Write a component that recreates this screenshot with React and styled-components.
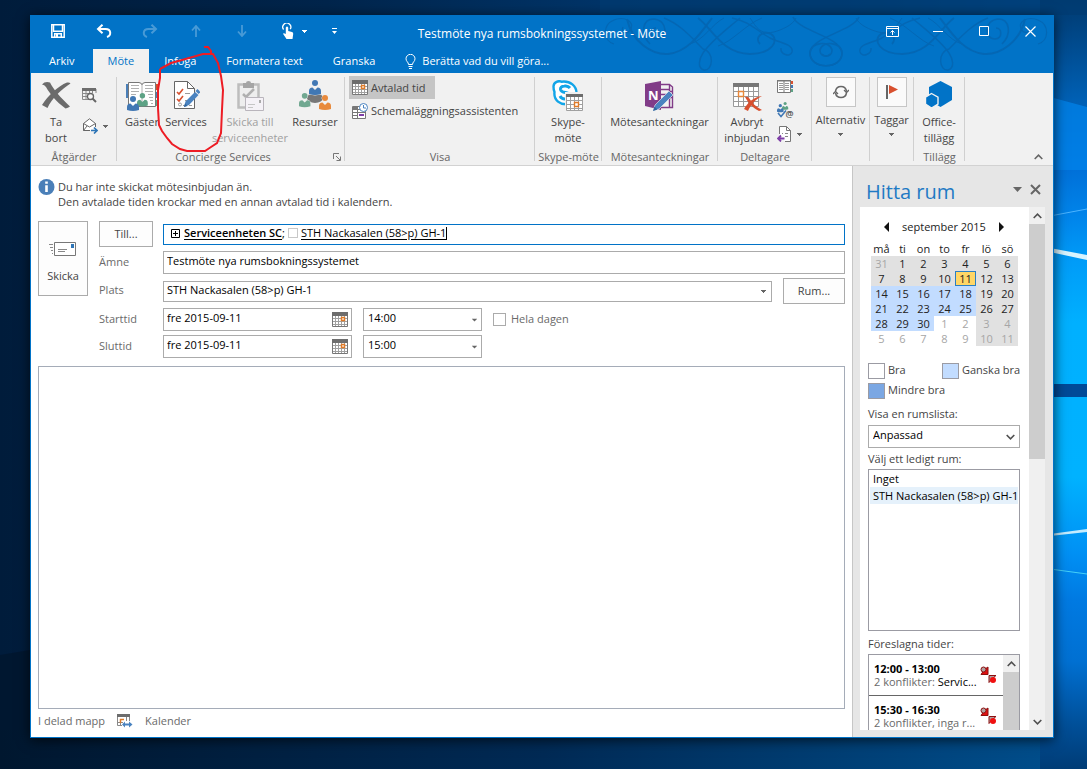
import React from 'react';
import styled, { createGlobalStyle } from 'styled-components';

const GlobalStyle = createGlobalStyle`
  * {
    box-sizing: border-box;
  }
  body {
    margin: 0;
  }
  body, button, input, select, textarea {
    font-family: "Open Sans", "Noto Sans", sans-serif;
    font-size: 11px;
    line-height: 16px;
    color: #444;
  }
  button {
    padding: 0;
    border: 0;
    background: none;
    cursor: pointer;
  }
  svg {
    display: block;
    flex: none;
  }
`;

const Desktop = styled.div`
  position: relative;
  display: flex;
  height: 100vh;
  padding: 15px 33px 31px 30px;
  overflow: hidden;
  background: linear-gradient(90deg, #001c3b 0%, #00254c 30%, #003468 55%, #004079 80%, #00529c 100%);
`;

const Wallpaper = styled.svg`
  position: absolute;
  top: 0;
  right: 0;
  width: 100%;
  height: 100%;
`;

const Window = styled.div`
  position: relative;
  display: flex;
  flex-direction: column;
  flex: 1;
  min-width: 0;
  border: 1px solid #0173c7;
  background: #fff;
  box-shadow: 0 2px 12px rgba(0, 0, 0, 0.7);
`;

/* title bar and tabs */

const Header = styled.header`
  position: relative;
  background: #0173c7;
  color: #fff;
`;

const Swirls = styled.svg`
  position: absolute;
  top: 0;
  right: 0;
`;

const TitleBar = styled.div`
  position: relative;
  display: grid;
  grid-template-columns: 1fr auto 1fr;
  height: 33px;
`;

const ButtonStrip = styled.div`
  display: flex;
  height: 30px;
  padding-left: ${({ $end }) => ($end ? 0 : 4)}px;
  justify-content: ${({ $end }) => ($end ? 'flex-end' : 'flex-start')};
`;

const TitleButton = styled.button`
  display: flex;
  align-items: center;
  justify-content: center;
  gap: 8px;
  width: 46px;
  padding-left: ${({ $split }) => ($split ? 12 : 0)}px;
  opacity: ${({ disabled }) => (disabled ? 0.28 : 1)};
`;

const Title = styled.h1`
  margin: 0;
  padding-top: 2px;
  font-size: 12px;
  font-weight: 400;
  line-height: 32px;
  white-space: nowrap;
`;

const Tabs = styled.nav`
  position: relative;
  display: flex;
  height: 24px;
`;

const Tab = styled.button`
  display: flex;
  align-items: center;
  gap: 6px;
  padding: 0 ${({ $wide }) => ($wide ? 18 : 15)}px;
  background: ${({ $active }) => ($active ? '#f1f1f1' : 'none')};
  color: ${({ $active }) => ($active ? '#0173c7' : '#fff')};
  white-space: nowrap;
`;

/* ribbon */

const Ribbon = styled.div`
  position: relative;
  display: flex;
  height: 93px;
  border-bottom: 1px solid #d2d2d2;
  background: #f1f1f1;
`;

const Group = styled.section`
  position: relative;
  display: flex;
  flex-direction: column;
  flex: none;
  width: ${({ $width }) => $width}px;
  &::after {
    content: '';
    position: absolute;
    top: 4px;
    right: 0;
    bottom: 4px;
    width: 1px;
    background: #d0d0d0;
  }
`;

const GroupBody = styled.div`
  display: flex;
  flex: 1;
  justify-content: ${({ $start }) => ($start ? 'flex-start' : 'center')};
  padding: 4px 5px 0 4px;
`;

const GroupLabel = styled.div`
  height: 16px;
  padding-right: ${({ $launcher }) => ($launcher ? 16 : 0)}px;
  color: #666;
  text-align: center;
  white-space: nowrap;
`;

const Launcher = styled.button`
  position: absolute;
  right: 4px;
  bottom: 4px;
`;

const Collapse = styled.button`
  position: absolute;
  right: 10px;
  bottom: 5px;
`;

const BigButton = styled.button`
  display: flex;
  flex-direction: column;
  align-items: center;
  flex: none;
  gap: 2px;
  width: ${({ $width }) => $width}px;
  padding-top: 3px;
  color: ${({ disabled }) => (disabled ? '#a0a0a0' : '#444')};
  white-space: nowrap;
`;

const BigLabel = styled.span`
  display: flex;
  flex-direction: column;
  align-items: center;
`;

const BoxButton = styled(BigButton)`
  gap: 5px;
  padding-top: 0;
`;

const IconBox = styled.span`
  display: flex;
  align-items: center;
  justify-content: center;
  width: 30px;
  height: 30px;
  border: 1px solid #c6c6c6;
  background: #fafafa;
`;

const SmallColumn = styled.div`
  display: flex;
  flex-direction: column;
  gap: ${({ $gap }) => $gap}px;
  padding: ${({ $top }) => $top}px 0 0 5px;
`;

const SmallButton = styled.button`
  display: flex;
  align-items: center;
  gap: 5px;
`;

const ViewColumn = styled.div`
  display: flex;
  flex-direction: column;
  align-items: flex-start;
  margin-top: -1px;
`;

const ViewButton = styled.button`
  display: flex;
  align-items: center;
  gap: 3px;
  height: 23px;
  padding: 0 10px 0 3px;
  background: ${({ $active }) => ($active ? '#c5c5c5' : 'none')};
  white-space: nowrap;
`;

const RedMark = styled.svg`
  position: absolute;
  top: 24px;
  left: 124px;
  pointer-events: none;
`;

/* form */

const Body = styled.div`
  display: flex;
  flex: 1;
  min-height: 0;
`;

const Main = styled.main`
  display: flex;
  flex-direction: column;
  flex: 1;
  min-width: 0;
  padding: 13px 7px 0;
`;

const Info = styled.div`
  display: flex;
  gap: 3px;
  p {
    margin: 0;
    line-height: 15px;
  }
`;

const Form = styled.form`
  display: flex;
  align-items: flex-start;
  gap: 11px;
  margin: 12px 0 8px;
`;

const OutlineButton = styled.button`
  width: ${({ $width }) => $width}px;
  height: 26px;
  border: 1px solid #ababab;
  background: #fdfdfd;
`;

const SendButton = styled(OutlineButton)`
  display: flex;
  flex-direction: column;
  align-items: center;
  justify-content: center;
  gap: 12px;
  height: 75px;
  padding-top: 8px;
`;

const Rows = styled.div`
  display: flex;
  flex-direction: column;
  flex: 1;
  gap: 4px;
`;

const Row = styled.div`
  display: grid;
  grid-template-columns: 54px 1fr;
  column-gap: 10px;
  align-items: center;
  label {
    padding-bottom: 2px;
    color: #6a6a6a;
  }
`;

const Fields = styled.div`
  display: flex;
  align-items: center;
  gap: 11px;
`;

const Field = styled.div`
  display: flex;
  align-items: center;
  flex: ${({ $width }) => ($width ? 'none' : 1)};
  width: ${({ $width }) => ($width ? `${$width}px` : 'auto')};
  height: ${({ $low }) => ($low ? 21 : 23)}px;
  padding: 0 3px;
  border: 1px solid ${({ $focus }) => ($focus ? '#0173c7' : '#ababab')};
  background: #fff;
  color: #000;
  white-space: nowrap;
  input {
    flex: 1;
    min-width: 0;
    padding: 0 0 ${({ $low }) => ($low ? 2 : 3)}px;
    border: 0;
    outline: 0;
    background: none;
    color: #000;
  }
`;

const Recipients = styled(Field)`
  padding: 0 3px 2px 7px;
  svg {
    margin-right: 4px;
  }
  b {
    font-weight: 600;
  }
  b, u {
    text-underline-offset: 2px;
  }
`;

const Presence = styled.span`
  width: 10px;
  height: 10px;
  margin: 0 3px;
  border: 1px solid #c8c8c8;
`;

const Caret = styled.span`
  width: 1px;
  height: 13px;
  background: #000;
`;

const PickerButton = styled.button`
  display: flex;
  padding: 0 ${({ $slim }) => ($slim ? 2 : 0)}px;
`;

const SelectWrap = styled.div`
  position: relative;
  width: ${({ $width }) => ($width ? `${$width}px` : '100%')};
  select {
    display: block;
    width: 100%;
    height: 23px;
    padding: 0 4px 3px;
    border: 1px solid #ababab;
    border-radius: 0;
    appearance: none;
    background: #fff;
    color: #000;
  }
  svg {
    position: absolute;
    top: 50%;
    right: 5px;
    transform: translateY(-50%);
    pointer-events: none;
  }
`;

const AllDay = styled.div`
  display: flex;
  align-items: center;
  gap: 5px;
  input {
    width: 13px;
    height: 13px;
    margin: 0;
    border: 1px solid #ababab;
    appearance: none;
    background: #fff;
  }
`;

const Editor = styled.textarea`
  flex: 1;
  width: 100%;
  min-height: 0;
  border: 1px solid #a5acb8;
  outline: 0;
  resize: none;
`;

const StatusBar = styled.footer`
  display: flex;
  align-items: center;
  gap: 12px;
  height: 28px;
  padding-bottom: 4px;
  color: #6a6a6a;
`;

/* room finder */

const Sidebar = styled.aside`
  display: flex;
  flex-direction: column;
  flex: none;
  width: 201px;
  padding: 0 8px 7px 7px;
  border-left: 1px solid #c6c6c6;
  background: #e6e6e6;
`;

const SidebarHead = styled.div`
  display: flex;
  align-items: center;
  gap: 8px;
  height: 41px;
  padding: 6px 4px 0 6px;
  h2 {
    flex: 1;
    margin: 0;
    padding-top: 5px;
    color: #1f7ac4;
    font-size: 20px;
    font-weight: 400;
    line-height: 28px;
  }
`;

const Panel = styled.div`
  display: flex;
  flex: 1;
  min-height: 0;
  overflow: hidden;
  background: #fff;
`;

const PanelBody = styled.div`
  flex: 1;
  min-width: 0;
  padding: 12px 9px 0 8px;
`;

const ScrollBar = styled.div`
  display: flex;
  flex-direction: column;
  flex: none;
  width: 16px;
  background: #f0f0f0;
  button {
    display: flex;
    align-items: center;
    justify-content: center;
    height: 17px;
  }
`;

const Thumb = styled.div`
  flex: 0 0 ${({ $size }) => $size};
  background: #cdcdcd;
`;

const Spacer = styled.div`
  flex: 1;
`;

const MonthBar = styled.div`
  display: flex;
  align-items: center;
  justify-content: center;
  gap: 13px;
  height: 16px;
  color: #222;
`;

const Calendar = styled.table`
  width: 147px;
  margin: 6px 0 17px 3px;
  border-collapse: collapse;
  table-layout: fixed;
  color: #222;
  line-height: 15px;
  th, td {
    height: 15px;
    padding: 0;
    font-weight: 400;
    text-align: center;
  }
`;

const dayColors = { busy: '#e1e1e1', fair: '#c2dcff', none: 'transparent', today: '#ffd666' };

const Day = styled.td`
  background: ${({ $kind }) => dayColors[$kind]};
  color: ${({ $dim }) => ($dim ? '#a6a6a6' : '#222')};
  box-shadow: ${({ $kind }) => ($kind === 'today' ? 'inset 0 0 0 1px #2b7fc4' : 'none')};
`;

const Legend = styled.ul`
  display: grid;
  grid-template-columns: 74px auto;
  row-gap: 4px;
  margin: 0 0 7px;
  padding: 0;
  list-style: none;
  li {
    display: flex;
    gap: 3px;
    line-height: 14px;
    white-space: nowrap;
  }
`;

const Swatch = styled.span`
  flex: none;
  width: 17px;
  height: 16px;
  border: 1px solid #9b9ba3;
  background: ${({ $color }) => $color};
`;

const PanelLabel = styled.label`
  display: block;
  margin: ${({ $gap }) => $gap}px 0 ${({ $tight }) => ($tight ? 2 : 3)}px;
  white-space: nowrap;
`;

const RoomList = styled.ul`
  height: 162px;
  margin: 0;
  padding: 0 1px;
  border: 1px solid #9b9ba3;
  list-style: none;
  overflow: hidden;
`;

const Room = styled.li`
  padding: 0 3px;
  background: ${({ $active }) => ($active ? '#e5f1fb' : 'none')};
  color: #000;
  line-height: 17px;
  white-space: nowrap;
`;

const Times = styled.div`
  display: flex;
  height: 160px;
  border: 1px solid #9b9ba3;
`;

const TimeList = styled.ul`
  flex: 1;
  min-width: 0;
  margin: 0;
  padding: 0;
  list-style: none;
`;

const Slot = styled.li`
  display: flex;
  align-items: center;
  justify-content: space-between;
  height: 41px;
  padding: 0 6px 0 5px;
  border-bottom: 1px solid #666;
  b, span {
    display: block;
    color: #000;
    line-height: 13px;
    white-space: nowrap;
  }
  i {
    color: #6a6a6a;
    font-style: normal;
  }
`;

/* icons */

const Down = ({ color = '#666', big }) => (
  big ? (
    <svg width="9" height="5" viewBox="0 0 9 5"><path d="M0 0H9L4.500 5Z" fill={color} /></svg>
  ) : (
    <svg width="5" height="3" viewBox="0 0 5 3"><path d="M0 0H5V1H4V2H3V3H2V2H1V1H0Z" fill={color} /></svg>
  )
);

const Chevron = ({ up, color = '#505050', width = 9 }) => (
  <svg width={width} height="6" viewBox="0 0 9 6">
    <path d={up ? 'M.7 5L4.5 1.2L8.3 5' : 'M.7 1L4.5 4.8L8.3 1'} fill="none" stroke={color} strokeWidth="1.6" />
  </svg>
);

const person = (x, y, color, scale = 1) => (
  <g transform={`translate(${x} ${y}) scale(${scale})`} fill={color}>
    <circle cx="6" cy="3" r="3" />
    <path d="M0 14V11Q0 7.500 3.500 7.500L6 10L8.500 7.500Q12 7.500 12 11V14Q6 16 0 14Z" />
  </g>
);

const CalendarIcon = () => (
  <svg width="16" height="15" viewBox="0 0 16 15">
    <path d="M.5.5H15.500V14.500H.5Z" fill="#fff" stroke="#777" />
    <path d="M0 0H16V4H0Z" fill="#6d6d6d" />
    <path d="M3.500 4V14M6.500 4V14M9.500 4V14M12.500 4V14M1 6.500H15M1 9.500H15M1 12.500H15" stroke="#a0a0a0" />
    <path d="M9.500 5.500H12.500V8.500H9.500Z" fill="#fff" stroke="#e07b28" strokeWidth="1.500" />
  </svg>
);

const SaveIcon = () => (
  <svg width="14" height="14" viewBox="0 0 14 14" fill="none" stroke="#fff" strokeWidth="1.500">
    <path d="M.8.8H13.200V13.200H.8Z" />
    <path d="M2.500 1V7.200H11.500V1M3.700 13V9.800H10.300V13" />
    <path d="M5 10H7V13H5Z" fill="#fff" stroke="none" />
  </svg>
);

const UndoIcon = ({ flip }) => (
  <svg width="16" height="14" viewBox="0 0 16 14" fill="none" stroke="#fff" strokeWidth="2">
    <g transform={flip ? 'translate(16 0) scale(-1 1)' : undefined}>
      <path d="M2 5H9.500C15.500 5 15.500 11.500 11 13" />
      <path d="M6.500 .7L2 5L6.500 9.300" />
    </g>
  </svg>
);

const ArrowIcon = ({ down }) => (
  <svg width="10" height="12" viewBox="0 0 10 12" fill="none" stroke="#fff" strokeWidth="1.800">
    <path d={down ? 'M5 0V11M1 6.500L5 11L9 6.500' : 'M5 12V1M1 5.500L5 1L9 5.500'} />
  </svg>
);

const TouchIcon = () => (
  <svg width="12" height="16" viewBox="0 0 12 16">
    <path d="M1.600 6.500A4 4 0 1 1 8.200 6.200" fill="none" stroke="#fff" strokeWidth="1.300" />
    <path d="M3.800 4.500Q5 2.500 6.200 4.500V8L10 9Q11.500 9.500 11.200 11L10.500 16H4.500L1 10.800Q1.500 9.500 3.800 11Z" fill="#fff" />
  </svg>
);

const DeleteIcon = () => (
  <svg width="30" height="32" viewBox="0 0 30 32" fill="#6b6b6b">
    <path d="M1 4.500Q4 1 9 2.500C12 9 20 18 29 26.500Q27 28 24.500 28.500C15 21.500 9 14 5 7Q3.500 4.500 1 4.500Z" />
    <path d="M29.500 3.500C21 9 11 18 6.500 28L1 25C7 15.500 17 6 26 2.500Q28.500 2 29.500 3.500Z" />
  </svg>
);

const FindCalendarIcon = () => (
  <svg width="15" height="15" viewBox="0 0 15 15">
    <path d="M.5 1V11.500H7M14 1V5M4 3V11M7.500 3V6M10.500 3V5M1 5.500H7M1 8.500H6" fill="none" stroke="#8a8a8a" />
    <path d="M0 0H14V3H0Z" fill="#6d6d6d" />
    <circle cx="8.500" cy="8.500" r="3" fill="#f8f8f8" stroke="#666" strokeWidth="1.300" />
    <path d="M10.500 10.500L14 14" stroke="#666" strokeWidth="2" />
  </svg>
);

const ForwardMailIcon = () => (
  <svg width="16" height="16" viewBox="0 0 16 16">
    <path d="M8 12.500H1.500V5.500L7.500.8L13.500 5.500V9" fill="#fff" stroke="#666" />
    <path d="M1.500 5.500L7.500 9L13.500 5.500M1.500 12.500L5 8" fill="none" stroke="#666" />
    <path d="M9 12.500H14M12 9.500L15 12.500L12 15.500" fill="none" stroke="#2e75b6" strokeWidth="1.600" />
  </svg>
);

const GuestsIcon = () => (
  <svg width="32" height="32" viewBox="0 0 32 32">
    <path d="M0 4H2V18H0Z" fill="#4a7fb8" />
    <path d="M30 4H32V10H30Z" fill="#d8502f" />
    <path d="M30 12H32V18H30Z" fill="#4a7fb8" />
    <path d="M30 20H32V26H30Z" fill="#5da285" />
    <path d="M2.500 2.500H13Q16 3 16 5Q16 3 19 2.500H29.500V26.500H2.500Z" fill="#fff" stroke="#777" />
    <path d="M16 4V26M5 5.500H13M5 8.500H13M5 11.500H13M5 14.500H10M19 5.500H27M19 8.500H27M19 11.500H27M22 14.500H27M23 17.500H27M24 20.500H27M25 23.500H27" stroke="#b0b0b0" />
    {person(11, 13, '#5da285', 0.9)}
    {person(1, 16, '#4178b4')}
  </svg>
);

const ServicesIcon = () => (
  <svg width="28" height="32" viewBox="0 0 28 32">
    <path d="M2.500 1.500H15.500L22.500 8.500V28.500H2.500Z" fill="#fff" stroke="#666" />
    <path d="M15.500 1.500V8.500H22.500" fill="none" stroke="#666" />
    <path d="M5 12L7 14L11 9M5 19L7 21L11 16" fill="none" stroke="#d8502f" strokeWidth="1.600" />
    <path d="M13 13.500H18M13 20.500H15M11 25.500H14M17 25.500H20" stroke="#999" />
    <circle cx="8" cy="24.500" r="1.500" fill="none" stroke="#999" />
    <path d="M12 27L13.500 21.500L23 12L26.500 15L17 25Z" fill="#4a83c0" />
    <path d="M23.500 11L25.500 9L28.500 12L26.500 14Z" fill="#4a83c0" />
    <path d="M12 27L13 23.500L15.500 26Z" fill="#2f66a0" />
  </svg>
);

const SendUnitsIcon = () => (
  <svg width="28" height="32" viewBox="0 0 28 32">
    <path d="M2.500 4.500H22.500V27.500H2.500Z" fill="#eee" stroke="#bdbdbd" strokeWidth="2.500" />
    <path d="M7 3H10Q10 1 12.500 1Q15 1 15 3H18V8H7Z" fill="#a5a5a5" />
    <path d="M7 14L10 17L18 9" fill="none" stroke="#b0b0b0" strokeWidth="2.500" />
    <path d="M9.500 17.500H27.500V30.500H9.500Z" fill="#f5f2f7" stroke="#b9b5bc" />
    <path d="M12 24.500H19M12 27.500H17" stroke="#c6c6c6" />
    <path d="M23 20H25V23H23Z" fill="#aaa" />
  </svg>
);

const ResourcesIcon = () => (
  <svg width="34" height="32" viewBox="0 0 34 32">
    <ellipse cx="17" cy="18" rx="8" ry="5" fill="#777" />
    <g stroke="#f1f1f1" strokeWidth="1" paintOrder="stroke">
      {person(11, 0, '#4178b4')}
      {person(1, 13, '#71a891', 0.95)}
      {person(21, 15, '#e88a3c')}
    </g>
  </svg>
);

const AssistantIcon = () => (
  <svg width="16" height="16" viewBox="0 0 16 16">
    <path d="M.5 3.500H13.500V15.500H.5ZM.5 6.500H13M.5 9.500H13M.5 12.500H5M5.500 6.500V15" fill="#fff" stroke="#777" />
    <path d="M1 3H6V6H1Z" fill="#777" />
    <path d="M7 11H12V13H7Z" fill="#7f3fa8" />
    <circle cx="11.500" cy="4.500" r="4" fill="#fff" stroke="#4a83c0" />
    <path d="M11.500 2V5H14" fill="none" stroke="#4a83c0" />
  </svg>
);

const SkypeIcon = () => (
  <svg width="32" height="32" viewBox="0 0 32 32">
    <path d="M1.500 6.500C1.500 1.500 7 .5 9.500 1.700C18 .5 25 6 24.500 14C27 20 23 25 17 24C8 25.500 1.500 20 2.500 12C1.500 10 1.500 8 1.500 6.500Z" fill="#fff" stroke="#12a5e8" strokeWidth="2.400" />
    <path d="M18 8Q16 5.500 12.500 6Q8 6.500 8.500 9.500Q9 12 13.500 12.500Q18 13.500 18 16Q17.500 19 13 19Q9.500 19 8 16" fill="none" stroke="#12a5e8" strokeWidth="3" />
    <path d="M13 12H32V32H13Z" fill="#f1f1f1" />
    <path d="M14.500 14.500H30.500V30.500H14.500ZM18.500 17V30M22.500 17V30M26.500 17V30M15 20.500H30M15 24.500H30M15 28.500H30" fill="#fff" stroke="#a0a0a0" />
    <path d="M14 14H31V17H14Z" fill="#6d6d6d" />
    <path d="M22.500 22.500H26.500V26.500H22.500Z" fill="#fff" stroke="#e07b28" strokeWidth="1.400" />
  </svg>
);

const OneNoteIcon = () => (
  <svg width="32" height="32" viewBox="0 0 32 32">
    <path d="M14 4.500H25.500L28.500 7V27.500H14M17 9.500H25M17 14.500H25M17 19.500H23M25.500 5V27M26 11.500H29M26 17.500H29" fill="none" stroke="#813c88" strokeWidth="1.400" />
    <path d="M1 4L17 1V30L1 26Z" fill="#813c88" />
    <text x="4" y="20" fill="#fff" fontSize="13" fontWeight="700" fontFamily="Open Sans">N</text>
    <path d="M9 31L11 25L25 11L29 15L15 29Z" fill="#4a83c0" stroke="#f1f1f1" strokeWidth=".6" />
    <path d="M9 31L10.500 26.500L13.500 29.500Z" fill="#2f66a0" />
  </svg>
);

const CancelIcon = () => (
  <svg width="30" height="32" viewBox="0 0 30 32">
    <path d="M1.500 4V26.500H26.500V4M6.500 6V26M11.500 6V26M16.500 6V26M21.500 6V26M2 11.500H26M2 16.500H26M2 21.500H26" fill="#fff" stroke="#9a9a9a" />
    <path d="M1 3H27V7H1Z" fill="#777" />
    <path d="M6.500 11.500H11.500V16.500H6.500Z" fill="#fff" stroke="#e8883a" strokeWidth="1.400" />
    <path d="M13 17Q15 16 17 18C20 23 24 27 30 30L27 31C21 28 17 24 13 17Z" fill="#d8502f" />
    <path d="M30 16C24 19 19 24 16 31L12 29C16 22 22 17 30 16Z" fill="#d8502f" />
  </svg>
);

const AddressBookIcon = () => (
  <svg width="16" height="14" viewBox="0 0 16 14">
    <path d="M.5 1V12.500H13.500V1M7 1V13" fill="#fff" stroke="#777" />
    <path d="M0 0H14V1.500H0Z" fill="#777" />
    <path d="M2 3.500H6M2 5.500H6M2 7.500H6M2 9.500H6M8 3.500H12M8 5.500H12M8 7.500H12M8 9.500H12" stroke="#999" />
    <path d="M14 1H16V4H14Z" fill="#d8502f" />
    <path d="M14 5H16V8H14Z" fill="#4178b4" />
    <path d="M14 9H16V12H14Z" fill="#5da285" />
  </svg>
);

const CheckNamesIcon = () => (
  <svg width="17" height="16" viewBox="0 0 17 16">
    {person(5, 0, '#5da285', 0.52)}
    {person(0, 2, '#4178b4', 0.55)}
    <path d="M1 11L4 14.500L9 8.500" fill="none" stroke="#4178b4" strokeWidth="1.600" />
    <text x="8.500" y="14.500" fill="#555" fontSize="9" fontWeight="600" fontFamily="Open Sans">@</text>
  </svg>
);

const ResponseIcon = () => (
  <svg width="15" height="16" viewBox="0 0 15 16">
    <path d="M2.500 8V.5H9.500L13.500 4.500V15.500H8" fill="#fff" stroke="#777" />
    <path d="M9.500.5V4.500H13.500" fill="none" stroke="#777" />
    <path d="M5 7.500H6M8 7.500H11M8 10.500H11" stroke="#888" />
    <path d="M1 12.500H7.500M4 9.500L1 12.500L4 15.500" fill="none" stroke="#7f3fa8" strokeWidth="1.800" />
  </svg>
);

const CycleIcon = () => (
  <svg width="16" height="14" viewBox="0 0 16 14" fill="none" stroke="#666" strokeWidth="1.500">
    <path d="M2.500 6A5.600 5.600 0 0 1 13.500 6M13.500 8A5.600 5.600 0 0 1 2.500 8" />
    <path d="M11 5L13.500 7.500L16 5M0 9L2.500 6.500L5 9" strokeWidth="1.300" />
  </svg>
);

const FlagIcon = () => (
  <svg width="12" height="14" viewBox="0 0 12 14">
    <path d="M0 0H2V14H0Z" fill="#666" />
    <path d="M3 0L12 4.500L3 9Z" fill="#d8502f" />
  </svg>
);

const AddinIcon = () => (
  <svg width="28" height="32" viewBox="0 0 28 32">
    <path d="M15.500 1L27 7V20L15.500 27L4 20V7Z" fill="#0173c7" />
    <path d="M6.500 13.500L13 17.200V24L6.500 28L.5 24V17.200Z" fill="#0173c7" stroke="#f1f1f1" strokeWidth="1.400" />
  </svg>
);

const InfoIcon = () => (
  <svg width="17" height="17" viewBox="0 0 17 17">
    <circle cx="8.500" cy="8" r="8" fill="#4a7fb8" />
    <path d="M7.200 2.500H9.800V4.800H7.200ZM7.200 6.200H9.800V13H7.200Z" fill="#fff" />
  </svg>
);

const SendIcon = () => (
  <svg width="28" height="14" viewBox="0 0 28 14">
    <path d="M5.500.5H26.500V13.500H5.500Z" fill="#fff" stroke="#777" />
    <path d="M0 2.500H4M1 5.500H4M2 8.500H4M3 11.500H4M9 7.500H18M9 9.500H16" stroke="#888" />
    <path d="M22 2H25V6H22Z" fill="#2e75b6" />
  </svg>
);

const PlusBoxIcon = () => (
  <svg width="9" height="9" viewBox="0 0 9 9">
    <path d="M.5.5H8.500V8.500H.5ZM4.500 2V7M2 4.500H7" fill="none" stroke="#000" />
  </svg>
);

const SharedCalendarIcon = () => (
  <svg width="16" height="14" viewBox="0 0 16 14">
    <path d="M.5 1V11.500H5M12.500 1V7M3.500 5V11M9.500 3V7M1 8.500H6" fill="none" stroke="#888" />
    <path d="M0 0H13V3H0Z" fill="#6d6d6d" />
    <path d="M3.500 9V5.500H7" fill="none" stroke="#e07b28" strokeWidth="1.500" />
    <path d="M5 10.500L8 7.500V9.500H12V7.500L15.500 10.500L12 13.500V11.500H8V13.500Z" fill="#4a83c0" />
  </svg>
);

const ConflictIcon = () => (
  <svg width="17" height="18" viewBox="0 0 17 18">
    <path d="M1 8.500H8V1L5 3L2 7Z" fill="#e01010" stroke="#8c0f0f" />
    <circle cx="3.500" cy="3.500" r="2.500" fill="#b0a0a0" stroke="#8c0f0f" />
    <path d="M9 16.500V9.500H16L12.500 12.500Z" fill="#b0a0a0" stroke="#8c0f0f" />
    <circle cx="13" cy="14" r="3" fill="#f01010" />
  </svg>
);

const swirlHalf = (
  <>
    <path d="M14 28C3 25 2 9 14 4C24 0 34 5 31 13C28 19 20 16 23 11" strokeWidth="1.200" />
    <path d="M27 3C32 26 52 39 68 38C88 36 100 18 112 2" strokeWidth="2" />
    <path d="M50 28C40 18 42 3 54 3C68 4 68 23 57 23C49 22 50 12 56 12" strokeWidth="1.600" />
    <path d="M64 2C80 8 92 22 103 33C115 36 113 55 104 54C97 52 99 43 103 37C112 24 126 14 140 2" strokeWidth="1.400" />
    <path d="M98 2C112 12 122 38 150 38C172 38 180 24 171 18C162 14 154 22 160 28" strokeWidth="1.800" />
    <path d="M118 30C132 26 146 8 162 2M90 28C104 24 112 8 124 2" strokeWidth="1" />
    <path d="M132 2C148 5 156 14 170 22C180 27 194 28 192 36C190 42 180 38 181 32" strokeWidth="1.400" />
    <path d="M193 1C200 16 240 20 242 37C242 54 210 54 210 37C210 26 230 24 232 34C232 40 226 42 222 38" strokeWidth="1.600" />
    <path d="M150 2C156 10 160 22 180 14C190 10 194 6 196 2" strokeWidth="1" />
  </>
);

const weekdays = ['må', 'ti', 'on', 'to', 'fr', 'lö', 'sö'];
const weeks = [
  [31, 1, 2, 3, 4, 5, 6],
  [7, 8, 9, 10, 11, 12, 13],
  [14, 15, 16, 17, 18, 19, 20],
  [21, 22, 23, 24, 25, 26, 27],
  [28, 29, 30, 1, 2, 3, 4],
  [5, 6, 7, 8, 9, 10, 11]
];

const dayKind = (week, col) => {
  if (week === 1 && col === 4) return 'today';
  if (week < 2 || col > 4) return 'busy';
  if (week < 4 || (week === 4 && col < 3)) return 'fair';
  return 'none';
};

const isOutside = (week, col) =>
  (week === 0 && col === 0) || (week === 4 && col > 2) || week === 5;

const Big = ({ icon, lines, width, disabled }) => (
  <BigButton type="button" $width={width} disabled={disabled}>
    {icon}
    <BigLabel>{lines.map((line) => <span key={line}>{line}</span>)}</BigLabel>
  </BigButton>
);

const TitleArea = () => (
  <Header>
    <Swirls width="453" height="57" viewBox="0 0 453 57" fill="none" stroke="#0467b4">
      <g>{swirlHalf}</g>
      <g transform="translate(452 0) scale(-1 1)">{swirlHalf}</g>
    </Swirls>
    <TitleBar>
      <ButtonStrip>
        <TitleButton aria-label="Spara"><SaveIcon /></TitleButton>
        <TitleButton aria-label="Ångra"><UndoIcon /></TitleButton>
        <TitleButton aria-label="Gör om" disabled><UndoIcon flip /></TitleButton>
        <TitleButton aria-label="Föregående" disabled><ArrowIcon /></TitleButton>
        <TitleButton aria-label="Nästa" disabled><ArrowIcon down /></TitleButton>
        <TitleButton aria-label="Pekläge" $split><TouchIcon /><Down color="#fff" /></TitleButton>
        <TitleButton aria-label="Anpassa">
          <svg width="5" height="6" viewBox="0 0 5 6" fill="#fff"><path d="M0 0H5V1H0ZM0 3H5L2.500 6Z" /></svg>
        </TitleButton>
      </ButtonStrip>
      <Title>Testmöte nya rumsbokningssystemet - Möte</Title>
      <ButtonStrip $end>
        <TitleButton aria-label="Menyfliksalternativ">
          <svg width="13" height="11" viewBox="0 0 13 11" fill="none" stroke="#fff">
            <path d="M.5.5H12.500V10.500H.5ZM1 2.500H12M6.500 9V4.500M4.500 6.500L6.500 4.500L8.500 6.500" />
          </svg>
        </TitleButton>
        <TitleButton aria-label="Minimera">
          <svg width="10" height="1" viewBox="0 0 10 1"><path d="M0 0H10V1H0Z" fill="#fff" /></svg>
        </TitleButton>
        <TitleButton aria-label="Maximera">
          <svg width="10" height="10" viewBox="0 0 10 10"><path d="M.5.5H9.500V9.500H.5Z" fill="none" stroke="#fff" /></svg>
        </TitleButton>
        <TitleButton aria-label="Stäng">
          <svg width="11" height="11" viewBox="0 0 11 11"><path d="M.5.5L10.500 10.500M10.500.5L.5 10.500" stroke="#fff" strokeWidth="1.200" /></svg>
        </TitleButton>
      </ButtonStrip>
    </TitleBar>
    <Tabs>
      <Tab $wide>Arkiv</Tab>
      <Tab $active>Möte</Tab>
      <Tab>Infoga</Tab>
      <Tab>Formatera text</Tab>
      <Tab>Granska</Tab>
      <Tab>
        <svg width="11" height="15" viewBox="0 0 11 15" fill="none" stroke="#fff">
          <path d="M3.500 10.500C3.500 8 1 7.500 1 4.800A4.500 4.500 0 0 1 10 4.800C10 7.500 7.500 8 7.500 10.500ZM3.500 12.500H7.500M4 14.500H7" />
        </svg>
        Berätta vad du vill göra...
      </Tab>
    </Tabs>
  </Header>
);

const RibbonBar = () => (
  <Ribbon>
    <Group $width={86}>
      <GroupBody $start>
        <Big icon={<DeleteIcon />} lines={['Ta', 'bort']} width={42} />
        <SmallColumn $top={11} $gap={15}>
          <SmallButton aria-label="Kalender"><FindCalendarIcon /></SmallButton>
          <SmallButton aria-label="Vidarebefordra"><ForwardMailIcon /><Down /></SmallButton>
        </SmallColumn>
      </GroupBody>
      <GroupLabel>Åtgärder</GroupLabel>
    </Group>
    <Group $width={228}>
      <GroupBody $start>
        <Big icon={<GuestsIcon />} lines={['Gäster']} width={42} />
        <Big icon={<ServicesIcon />} lines={['Services']} width={46} />
        <Big icon={<SendUnitsIcon />} lines={['Skicka till', 'serviceenheter']} width={82} disabled />
        <Big icon={<ResourcesIcon />} lines={['Resurser']} width={48} />
      </GroupBody>
      <GroupLabel $launcher>Concierge Services</GroupLabel>
      <Launcher aria-label="Fler alternativ">
        <svg width="8" height="8" viewBox="0 0 8 8" fill="none" stroke="#777">
          <path d="M.5 6V.5H6M3 3L7 7M7.500 3.500V7.500H3.500" />
        </svg>
      </Launcher>
    </Group>
    <Group $width={190}>
      <GroupBody $start>
        <ViewColumn>
          <ViewButton $active><CalendarIcon />Avtalad tid</ViewButton>
          <ViewButton><AssistantIcon />Schemaläggningsassistenten</ViewButton>
        </ViewColumn>
      </GroupBody>
      <GroupLabel>Visa</GroupLabel>
    </Group>
    <Group $width={67}>
      <GroupBody><Big icon={<SkypeIcon />} lines={['Skype-', 'möte']} width={56} /></GroupBody>
      <GroupLabel>Skype-möte</GroupLabel>
    </Group>
    <Group $width={116}>
      <GroupBody><Big icon={<OneNoteIcon />} lines={['Mötesanteckningar']} width={104} /></GroupBody>
      <GroupLabel>Mötesanteckningar</GroupLabel>
    </Group>
    <Group $width={94}>
      <GroupBody $start>
        <Big icon={<CancelIcon />} lines={['Avbryt', 'inbjudan']} width={50} />
        <SmallColumn $top={3} $gap={8}>
          <SmallButton aria-label="Adressbok"><AddressBookIcon /></SmallButton>
          <SmallButton aria-label="Kontrollera namn"><CheckNamesIcon /></SmallButton>
          <SmallButton aria-label="Svarsalternativ"><ResponseIcon /><Down /></SmallButton>
        </SmallColumn>
      </GroupBody>
      <GroupLabel>Deltagare</GroupLabel>
    </Group>
    <Group $width={58}>
      <GroupBody>
        <BoxButton $width={50}><IconBox><CycleIcon /></IconBox>Alternativ<Down /></BoxButton>
      </GroupBody>
    </Group>
    <Group $width={44}>
      <GroupBody>
        <BoxButton $width={35}><IconBox><FlagIcon /></IconBox>Taggar<Down /></BoxButton>
      </GroupBody>
    </Group>
    <Group $width={51}>
      <GroupBody><Big icon={<AddinIcon />} lines={['Office-', 'tillägg']} width={42} /></GroupBody>
      <GroupLabel>Tillägg</GroupLabel>
    </Group>
    <Collapse aria-label="Dölj menyfliksområdet"><Chevron up color="#666" /></Collapse>
  </Ribbon>
);

const TimeRow = ({ id, label, time, children }) => (
  <Row>
    <label htmlFor={id}>{label}</label>
    <Fields>
      <Field $width={189}>
        <input id={id} defaultValue="fre 2015-09-11" />
        <PickerButton type="button" aria-label="Välj datum"><CalendarIcon /></PickerButton>
      </Field>
      <SelectWrap $width={119}>
        <select aria-label={`${label}, klockslag`} defaultValue={time}>
          <option>{time}</option>
        </select>
        <Down />
      </SelectWrap>
      {children}
    </Fields>
  </Row>
);

const MeetingForm = () => (
  <Main>
    <Info>
      <InfoIcon />
      <div>
        <p>Du har inte skickat mötesinbjudan än.</p>
        <p>Den avtalade tiden krockar med en annan avtalad tid i kalendern.</p>
      </div>
    </Info>
    <Form onSubmit={(e) => e.preventDefault()}>
      <SendButton $width={50}><SendIcon />Skicka</SendButton>
      <Rows>
        <Row>
          <OutlineButton type="button" $width={54}>Till...</OutlineButton>
          <Recipients $low $focus>
            <PlusBoxIcon />
            <b><u>Serviceenheten SC</u></b>;
            <Presence />
            <u>STH Nackasalen (58&gt;p) GH-1</u>
            <Caret />
            <input aria-label="Till" />
          </Recipients>
        </Row>
        <Row>
          <label htmlFor="subject">Ämne</label>
          <Field><input id="subject" defaultValue="Testmöte nya rumsbokningssystemet" /></Field>
        </Row>
        <Row>
          <label htmlFor="place">Plats</label>
          <Fields>
            <Field $low>
              <input id="place" defaultValue="STH Nackasalen (58>p) GH-1" />
              <PickerButton $slim type="button" aria-label="Visa platser"><Down /></PickerButton>
            </Field>
            <OutlineButton type="button" $width={62}>Rum...</OutlineButton>
          </Fields>
        </Row>
        <TimeRow id="start" label="Starttid" time="14:00">
          <AllDay>
            <input type="checkbox" id="allday" />
            <label htmlFor="allday">Hela dagen</label>
          </AllDay>
        </TimeRow>
        <TimeRow id="end" label="Sluttid" time="15:00" />
      </Rows>
    </Form>
    <Editor aria-label="Meddelande" />
    <StatusBar>
      <span>I delad mapp</span>
      <SharedCalendarIcon />
      <span>Kalender</span>
    </StatusBar>
  </Main>
);

const RoomFinder = () => (
  <Sidebar>
    <SidebarHead>
      <h2>Hitta rum</h2>
      <button aria-label="Alternativ"><Down big /></button>
      <button aria-label="Stäng">
        <svg width="11" height="11" viewBox="0 0 11 11"><path d="M1 1L10 10M10 1L1 10" stroke="#666" strokeWidth="2" /></svg>
      </button>
    </SidebarHead>
    <Panel>
      <PanelBody>
        <MonthBar>
          <button aria-label="Föregående månad"><svg width="5" height="10" viewBox="0 0 5 10"><path d="M5 0V10L0 5Z" fill="#111" /></svg></button>
          september 2015
          <button aria-label="Nästa månad"><svg width="5" height="10" viewBox="0 0 5 10"><path d="M0 0V10L5 5Z" fill="#111" /></svg></button>
        </MonthBar>
        <Calendar>
          <thead>
            <tr>{weekdays.map((day) => <th key={day}>{day}</th>)}</tr>
          </thead>
          <tbody>
            {weeks.map((days, week) => (
              <tr key={week}>
                {days.map((day, col) => (
                  <Day key={col} $kind={dayKind(week, col)} $dim={isOutside(week, col)}>{day}</Day>
                ))}
              </tr>
            ))}
          </tbody>
        </Calendar>
        <Legend>
          <li><Swatch $color="#fff" />Bra</li>
          <li><Swatch $color="#c2dcff" />Ganska bra</li>
          <li><Swatch $color="#7ba7e3" />Mindre bra</li>
        </Legend>
        <PanelLabel htmlFor="roomlist" $gap={0}>Visa en rumslista:</PanelLabel>
        <SelectWrap>
          <select id="roomlist"><option>Anpassad</option></select>
          <Chevron />
        </SelectWrap>
        <PanelLabel as="div" id="rooms" $gap={3} $tight>Välj ett ledigt rum:</PanelLabel>
        <RoomList role="listbox" aria-labelledby="rooms">
          <Room role="option">Inget</Room>
          <Room role="option" aria-selected="true" $active>STH Nackasalen (58&gt;p) GH-1</Room>
        </RoomList>
        <PanelLabel as="div" $gap={5} $tight>Föreslagna tider:</PanelLabel>
        <Times>
          <TimeList>
            <Slot>
              <div><b>12:00 - 13:00</b><span><i>2 konflikter:</i> Servic...</span></div>
              <ConflictIcon />
            </Slot>
            <Slot>
              <div><b>15:30 - 16:30</b><span><i>2 konflikter, inga r...</i></span></div>
              <ConflictIcon />
            </Slot>
          </TimeList>
          <ScrollBar>
            <button aria-label="Uppåt"><Chevron up /></button>
            <Thumb $size="120px" />
          </ScrollBar>
        </Times>
      </PanelBody>
      <ScrollBar>
        <button aria-label="Uppåt"><Chevron up /></button>
        <Thumb $size="45%" />
        <Spacer />
        <button aria-label="Nedåt"><Chevron /></button>
      </ScrollBar>
    </Panel>
  </Sidebar>
);

const App = () => (
  <>
    <GlobalStyle />
    <Desktop>
      <Wallpaper viewBox="0 0 1087 769" preserveAspectRatio="xMaxYMax slice">
        <defs>
          <linearGradient id="sky" x1="0" y1="0" x2="0" y2="1">
            <stop offset="0" stopColor="#003a70" />
            <stop offset=".13" stopColor="#0060b4" />
            <stop offset=".22" stopColor="#0070d8" />
            <stop offset=".28" stopColor="#0084ea" />
            <stop offset=".34" stopColor="#009cf8" />
            <stop offset=".42" stopColor="#00b0ff" />
            <stop offset=".62" stopColor="#00b2ff" />
            <stop offset=".72" stopColor="#0090f4" />
            <stop offset=".78" stopColor="#007ae2" />
            <stop offset=".86" stopColor="#0070d2" />
            <stop offset=".94" stopColor="#00509a" />
            <stop offset="1" stopColor="#003c76" />
          </linearGradient>
          <linearGradient id="floor" x1="0" y1="0" x2="1" y2="0">
            <stop offset="0" stopColor="#00172f" />
            <stop offset=".5" stopColor="#002a55" />
            <stop offset="1" stopColor="#00508f" />
          </linearGradient>
        </defs>
        <path d="M0 655L30 650V769H0Z" fill="#001730" />
        <path d="M0 730H1087V769H0Z" fill="url(#floor)" />
        <path d="M1040 0H1087V769H1040Z" fill="url(#sky)" />
        <path d="M600 0H1087V15H600Z" fill="#003c72" opacity=".7" />
        <path d="M1050 97L1087 107V170H1050Z" fill="#0084ec" opacity=".7" />
        <path d="M1050 248L1087 255V260L1050 252Z" fill="#d8f4ff" />
        <path d="M1050 216L1087 209" stroke="#4cb4ff" />
        <path d="M1050 384H1087V397H1050Z" fill="#004a98" />
        <path d="M1050 534L1087 529V532L1050 536Z" fill="#c4ecff" />
        <path d="M1050 569L1087 574" stroke="#45d0f8" />
      </Wallpaper>
      <Window>
        <TitleArea />
        <RibbonBar />
        <Body>
          <MeetingForm />
          <RoomFinder />
        </Body>
        <RedMark width="72" height="116" viewBox="155 40 72 116" fill="none" stroke="#ed1c24" strokeWidth="2">
          <path d="M204 47L208 47L211 51L211 54M160 69L171 63L182 60L203 54L213 54L218 63L221 76L223 90L222 110L221 133L217 143L211 147L205 151H187L180 149L172 144L167 138L162 131L159 125L158 108V90L160 78V69" />
        </RedMark>
      </Window>
    </Desktop>
  </>
);

export default App;
